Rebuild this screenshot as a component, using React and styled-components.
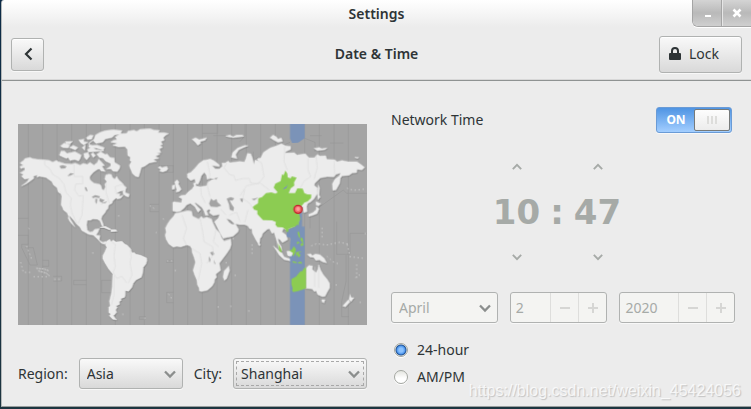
import React from "react";
import styled, { createGlobalStyle } from "styled-components";

const GlobalStyle = createGlobalStyle`
  * {
    box-sizing: border-box;
  }

  body {
    margin: 0;
    background: #1d3540;
    color: #2e3436;
    font-family: "Noto Sans", "Open Sans", sans-serif;
    font-size: 14px;
    line-height: 20px;
  }

  button,
  input,
  select {
    margin: 0;
    font: inherit;
    color: inherit;
  }
`;

const Desktop = styled.div`
  position: relative;
  min-height: 100vh;
  padding: 0 0 2px 1px;
  background: linear-gradient(to bottom, #0c2b47, #1d3540);
`;

const Window = styled.main`
  min-height: calc(100vh - 2px);
  border-left: 1px solid #b4b8b9;
  border-bottom: 1px solid #9a9e9e;
  border-top-left-radius: 3px;
  background: linear-gradient(to bottom, #ffffff 0, #ececec 27px);
`;

const TitleBar = styled.div`
  display: grid;
  grid-template-columns: 1fr auto 1fr;
  height: 28px;
`;

const Title = styled.h1`
  grid-column: 2;
  margin: 0;
  font-size: 14px;
  font-weight: 600;
  line-height: 28px;
`;

const WindowControls = styled.div`
  display: flex;
  justify-self: end;
  height: 27px;
  border: solid #a5a5a5;
  border-width: 0 0 1px 1px;
  border-bottom-left-radius: 6px;
  overflow: hidden;
  box-shadow: 0 1px 0 #fff;
`;

const WindowButton = styled.button`
  display: flex;
  align-items: center;
  justify-content: center;
  width: 29px;
  padding: 0;
  border: 0;
  background: linear-gradient(to bottom, #d4d4d4, #b9b9b9 50%, #cfcfcf);

  & + & {
    border-left: 1px solid #e6e6e6;
    box-shadow: -1px 0 0 #a5a5a5;
  }
`;

const Header = styled.header`
  display: grid;
  grid-template-columns: 1fr auto 1fr;
  align-items: center;
  height: 53px;
  padding: 0 9px;
  border-bottom: 1px solid #8f9392;
  box-shadow: inset 0 -1px 0 #d8d8d8;
`;

const HeaderTitle = styled.h2`
  margin: 0;
  font-size: 14px;
  font-weight: 600;
  line-height: 20px;
`;

const HeaderButton = styled.button`
  display: flex;
  align-items: center;
  gap: 8px;
  justify-self: ${(props) => (props.$end ? "end" : "start")};
  justify-content: ${(props) => (props.$end ? "flex-start" : "center")};
  width: ${(props) => (props.$end ? 83 : 33)}px;
  height: ${(props) => (props.$end ? 37 : 33)}px;
  padding: 0 9px;
  border: 1px solid #b0b2b1;
  border-radius: 3px;
  background: linear-gradient(to bottom, #f9f9f9, #d9d9d9);
  box-shadow: inset 0 1px 0 #fff, 0 1px 0 #f8f8f8;
`;

const Content = styled.div`
  display: grid;
  grid-template-columns: minmax(0, 349fr) minmax(0, 344fr);
  gap: 24px;
  padding: 25px 16px 16px;
`;

const PlacePanel = styled.section`
  padding-top: 18px;
`;

const Map = styled.svg`
  display: block;
  width: 100%;
  height: auto;
  background: #a4a4a4;
`;

const PlaceRow = styled.div`
  display: flex;
  align-items: center;
  gap: 11px;
  margin-top: 33px;
`;

const SelectBox = styled.div`
  display: grid;
  grid-template-columns: minmax(0, 1fr);
  flex: ${(props) => props.$flex};
  align-items: center;
  min-width: 0;
  color: #8b8e8d;

  & > * {
    grid-area: 1 / 1;
  }

  & > svg {
    justify-self: end;
    margin-right: 7px;
    pointer-events: none;
  }
`;

const Select = styled.select`
  appearance: none;
  width: 100%;
  height: 31px;
  padding: 0 7px;
  border: 1px solid #b0b2b1;
  border-radius: 3px;
  outline: ${(props) => (props.$focused ? "1px dashed #a8a8a8" : "none")};
  outline-offset: -4px;
  background: linear-gradient(to bottom, #f9f9f9, #d9d9d9);
  box-shadow: 0 1px 0 #f8f8f8;
  color: #2e3436;

  &:disabled {
    background: #f4f4f2;
    color: #a6aaa7;
    opacity: 1;
  }
`;

const TimePanel = styled.section`
  display: flex;
  flex-direction: column;
`;

const NetworkRow = styled.div`
  display: flex;
  align-items: center;
  justify-content: space-between;
  height: 27px;
  padding-right: 3px;
`;

const Switch = styled.label`
  display: grid;
  grid-template-columns: 1fr 1fr;
  align-items: center;
  width: 76px;
  height: 26px;
  padding: 1px;
  border: 1px solid #6a9bd6;
  border-radius: 3px;
  background: linear-gradient(to bottom, #4f94e3, #a3ceff);
  box-shadow: 0 1px 0 #f8f8f8;
  color: #fff;
  font-size: 12px;
  font-weight: 700;
  text-align: center;

  & input {
    appearance: none;
    width: 0;
    height: 0;
    position: absolute;
  }
`;

const SwitchKnob = styled.span`
  display: flex;
  align-items: center;
  justify-content: center;
  gap: 2px;
  height: 22px;
  border: 1px solid #777a79;
  border-radius: 2px;
  background: linear-gradient(to bottom, #fdfdfd, #ececec);

  & i {
    width: 2px;
    height: 8px;
    background: #dddddb;
  }
`;

const Clock = styled.div`
  display: grid;
  grid-template-columns: 48px 33px 48px;
  justify-content: center;
  justify-items: center;
  align-items: center;
  margin: 28px 12px 0 0;
  color: #a6aaa7;
`;

const StepButton = styled.button`
  display: flex;
  padding: 2px 8px;
  border: 0;
  background: none;

  &:disabled {
    color: #a6aaa7;
  }
`;

const Digits = styled.span`
  font-family: "DejaVu Sans", sans-serif;
  font-size: 34px;
  font-weight: 700;
  line-height: 78px;
`;

const DateRow = styled.div`
  display: flex;
  gap: 12px;
  margin-top: 29px;
`;

const Spin = styled.div`
  display: flex;
  flex: ${(props) => props.$flex} 1 0;
  min-width: 0;
  height: 31px;
  border: 1px solid #b0b2b1;
  border-radius: 3px;
  background: #f4f4f2;
  box-shadow: 0 1px 0 #f8f8f8;
  overflow: hidden;

  & input {
    flex: 1;
    width: 0;
    min-width: 0;
    padding: 0 5px;
    border: 0;
    background: none;
    color: #a6aaa7;
  }

  & button {
    display: flex;
    align-items: center;
    justify-content: center;
    width: 28px;
    padding: 0;
    border: 0;
    border-left: 1px solid #dededc;
    background: none;
    color: #d6d6d4;
  }
`;

const Formats = styled.div`
  display: flex;
  flex-direction: column;
  gap: 7px;
  margin-top: 17px;
  padding-left: 3px;
`;

const FormatLabel = styled.label`
  display: flex;
  align-items: center;
  gap: 9px;
`;

const Radio = styled.input`
  appearance: none;
  width: 14px;
  height: 14px;
  border: 1px solid #a4a7a1;
  border-radius: 50%;
  background: linear-gradient(to bottom, #e4e5e0, #ffffff 60%);
  box-shadow: 0 1px 0 #fff;

  &:checked {
    background: radial-gradient(
      circle at 50% 50%,
      #8cc3ff 0 2px,
      #4f97ee 4px,
      #1d4f91 5px,
      #f0f0ea 6px
    );
  }
`;

const Watermark = styled.div`
  position: absolute;
  right: 10px;
  bottom: 8px;
  color: rgba(255, 255, 255, 0.75);
  font-family: "Liberation Sans", sans-serif;
  font-size: 16px;
  text-shadow: 1px 1px 1px #c2c2c2;
  pointer-events: none;
`;

const Chevron = ({ direction = "down", small }) => {
  const paths = {
    down: "M1 2 L6 7 L11 2",
    up: "M1 7 L6 2 L11 7",
  };
  return (
    <svg
      width={small ? 10 : 12}
      height={small ? 8 : 10}
      viewBox="0 0 12 9"
      aria-hidden="true"
    >
      <path
        d={paths[direction]}
        fill="none"
        stroke="currentColor"
        strokeWidth="2.3"
      />
    </svg>
  );
};

const zoneLines = [
  55, 98, 141, 185, 229, 272, 316, 360, 403, 447, 490, 533, 577, 621, 665, 709,
  752, 796, 884, 928, 972, 1015,
];

// The view box is in thirds of a pixel; eastern and southern shapes are
// drawn in their own quadrant and shifted by 540 and 315.
const WorldMap = () => (
  <Map viewBox="24 27 1047 603" role="img" aria-label="Time zone map">
    <g fill="none" stroke="#979797" strokeWidth="2">
      {zoneLines.map((x) => (
        <path key={x} d={`M${x} 27 V630`} />
      ))}
      <path d="M24 310 H55 M24 361 H55 V388 H35 V398 L60 450 H82 L70 398 H45 M98 436 H116 V454 H98 M130 484 H155 V498 H130 M229 496 H191 V509 H229 M304 496 H275 V533 H304 M490 532 H470 V563 H490 M447 268 H420 V290 H447 M447 152 H490 V172 H447 M408 605 H388 V613 H408 M490 436 H470 V442 H490" />
      <path d="M577 55 H623 V27 M665 62 H610 M705 27 V62 L690 80 M730 110 V138 L745 126 M840 82 L800 100 M884 70 L915 82 V110 M935 62 H900 M1000 84 H960 M1071 235 H1010 L1000 225 L930 275 L900 300 V340 M980 320 V418 H1020 V355 H1071 M1008 420 V500 L995 560 V605 H1017" />
    </g>

    <g
      fill="#ececec"
      stroke="#ececec"
      strokeWidth="1.5"
      strokeLinejoin="round"
      style={{ filter: "drop-shadow(1px 2px 2px rgba(0, 0, 0, 0.25))" }}
    >
      {/* North and Central America */}
      <path d="M30 145 L36 139 L41 136 L44 131 L60 127 L66 130 L82 133 L99 134 L118 136 L128 141 L140 136 L144 140 L150 141 L165 146 L185 147 L196 144 L210 150 L220 145 L232 148 L240 142 L252 150 L262 142 L266 132 L274 140 L284 152 L276 153 L272 160 L262 164 L250 172 L240 184 L239 190 L242 196 L252 204 L270 208 L274 213 L276 222 L281 226 L286 216 L284 208 L290 200 L284 192 L287 180 L296 177 L304 178 L308 188 L314 192 L320 184 L327 195 L336 203 L344 213 L350 218 L344 226 L330 229 L318 236 L330 236 L328 244 L340 240 L332 250 L322 252 L318 249 L308 258 L306 265 L296 270 L294 281 L288 287 L286 292 L276 304 L274 312 L280 328 L281 336 L275 332 L270 318 L262 313 L248 312 L242 316 L232 316 L230 330 L232 345 L240 351 L248 350 L254 343 L268 341 L264 352 L258 360 L270 362 L268 375 L278 382 L288 379 L292 384 L284 388 L274 385 L262 372 L250 361 L235 358 L215 347 L210 337 L200 328 L190 315 L180 304 L174 302 L172 295 L160 285 L157 277 L153 270 L155 245 L152 232 L145 228 L140 218 L130 210 L125 200 L116 194 L108 188 L88 184 L80 187 L82 180 L70 184 L72 190 L60 199 L48 207 L34 213 L50 201 L58 190 L44 193 L34 184 L40 178 L30 174 L44 165 L44 158 L32 161 L30 154 L40 151 Z" />
      <path d="M176 303 L181 312 L187 322 L195 336 L186 328 L178 318 L174 309 Z" />
      <path d="M338 230 L347 222 L346 233 L358 237 L356 246 L348 244 L340 238 Z" />
      <path d="M142 224 L150 230 L155 238 L145 232 Z" />
      {/* Arctic archipelago */}
      <path d="M153 108 L164 108 L178 122 L170 131 L160 127 L148 121 Z M172 115 L195 110 L214 120 L211 130 L206 138 L194 134 L180 137 L173 126 Z M151 93 L162 84 L180 90 L174 99 L158 98 Z M178 98 L190 91 L204 98 L196 105 Z M166 80 L188 79 L180 87 L168 86 Z M206 75 L222 72 L221 80 L234 82 L221 90 L212 84 Z M216 98 L226 90 L224 107 Z M232 104 L245 96 L258 104 L282 108 L235 111 Z M221 116 L234 112 L239 124 L230 135 L223 128 Z M243 117 L249 113 L257 122 L249 128 Z M229 68 L240 60 L250 61 L245 73 L232 74 Z M256 60 L270 52 L286 47 L310 44 L336 47 L331 57 L314 60 L306 68 L286 72 L278 82 L258 86 L249 77 L235 87 L247 91 L262 90 L283 98 L280 106 L258 99 L236 97 L238 83 L252 73 Z M260 118 L272 110 L285 118 L292 117 L300 127 L313 129 L314 142 L330 152 L329 160 L322 170 L309 169 L303 162 L289 162 L302 153 L302 146 L287 139 L279 130 L268 128 Z M265 158 L277 155 L286 170 L273 168 Z" />
      {/* Greenland and Iceland */}
      <path d="M302 82 L310 76 L321 74 L315 66 L332 56 L350 55 L354 48 L372 45 L380 49 L390 43 L420 41 L433 45 L449 46 L444 53 L462 53 L476 56 L467 61 L460 68 L463 76 L453 80 L458 89 L450 91 L458 97 L448 102 L453 113 L441 114 L450 118 L436 124 L447 130 L430 134 L440 140 L418 144 L404 154 L394 158 L391 169 L386 186 L376 184 L367 176 L364 168 L359 157 L358 150 L364 140 L359 137 L361 127 L353 122 L352 104 L344 95 L326 96 L308 91 L322 85 Z" />
      <path d="M444 158 L450 154 L456 158 L470 154 L474 161 L470 167 L458 171 L448 168 L453 164 Z" />
      {/* South America */}
      <path
        transform="translate(0 315)"
        d="M290 64 L299 58 L304 65 L309 60 L318 66 L336 64 L344 72 L352 76 L362 86 L366 98 L374 98 L376 102 L392 106 L410 114 L411 122 L408 132 L400 142 L398 160 L394 172 L378 180 L370 190 L366 202 L356 214 L346 212 L346 224 L344 232 L332 236 L334 241 L328 245 L329 253 L318 258 L322 262 L317 270 L320 277 L314 284 L310 287 L320 300 L308 298 L298 288 L302 282 L296 278 L296 262 L300 258 L298 244 L304 219 L306 200 L308 162 L296 148 L284 128 L278 116 L278 107 L284 96 L290 82 L286 75 Z"
      />
      {/* Africa and Madagascar */}
      <path d="M480 315 L472 327 L466 339 L468 352 L465 360 L468 373 L476 387 L490 397 L500 394 L512 396 L530 390 L540 393 L545 401 L546 412 L552 428 L556 442 L549 466 L553 479 L560 495 L562 510 L567 519 L568 528 L575 530 L592 526 L606 514 L613 502 L614 493 L620 487 L617 478 L632 466 L628 445 L640 429 L650 416 L660 401 L664 388 L662 372 L642 378 L634 366 L630 354 L618 342 L608 322 L605 312 L590 306 L580 310 L574 304 L566 312 L548 303 L545 289 L534 287 L510 292 L496 295 L490 304 Z" />
      <path d="M656 453 L659 466 L650 491 L643 497 L639 486 L642 468 Z" />
      {/* Europe and Asia */}
      <path
        transform="translate(540 0)"
        d="M-52 288 L-52 262 L-48 260 L-26 263 L-24 252 L-34 246 L-26 241 L-14 240 L-5 230 L6 222 L12 213 L10 205 L17 202 L18 213 L31 215 L50 212 L53 202 L64 195 L75 192 L60 190 L51 193 L49 181 L43 172 L34 183 L30 196 L24 208 L18 206 L14 192 L2 197 L-8 188 L-8 176 L2 172 L16 158 L26 146 L39 136 L52 134 L61 132 L72 137 L88 149 L88 155 L66 151 L76 162 L88 162 L97 154 L96 144 L105 144 L115 138 L119 143 L149 139 L163 141 L167 132 L172 115 L182 116 L187 127 L192 149 L195 135 L204 138 L202 131 L212 129 L220 112 L240 99 L260 92 L274 86 L286 92 L302 94 L302 103 L289 109 L284 114 L313 113 L321 120 L346 116 L357 128 L373 128 L382 118 L390 123 L407 122 L411 133 L434 134 L442 140 L456 136 L474 140 L501 140 L514 149 L524 157 L516 165 L501 163 L500 173 L487 174 L477 181 L456 183 L451 190 L449 205 L438 225 L428 226 L427 206 L434 193 L448 182 L452 174 L438 178 L432 186 L412 185 L391 189 L374 205 L373 212 L382 218 L382 235 L372 252 L362 261 L353 265 L350 274 L351 290 L341 293 L339 276 L330 274 L320 281 L322 292 L328 299 L331 312 L328 325 L317 334 L300 340 L289 345 L281 340 L276 350 L290 361 L293 374 L277 383 L270 374 L263 370 L267 384 L274 395 L276 407 L267 401 L262 385 L257 369 L252 352 L246 356 L238 341 L232 343 L218 355 L215 365 L210 371 L209 382 L204 385 L198 376 L187 355 L185 341 L179 342 L173 333 L164 329 L148 329 L132 325 L121 315 L109 310 L118 323 L128 329 L136 326 L146 343 L144 351 L129 364 L112 367 L99 370 L88 350 L73 320 L85 309 L89 298 L70 302 L58 294 L61 284 L56 283 L50 288 L55 301 L46 301 L42 289 L36 278 L18 264 L13 263 L23 275 L32 284 L24 292 L14 275 L1 265 L-10 270 L-17 279 L-29 289 L-40 291 Z"
      />
      {/* British Isles, Novaya Zemlya, Svalbard, Sakhalin, Japan, Sri Lanka */}
      <path d="M498 231 L500 223 L497 215 L494 201 L501 194 L507 201 L505 207 L514 223 L507 230 Z M486 223 L487 211 L494 210 L494 222 Z" />
      <path
        transform="translate(540 0)"
        d="M124 127 L128 112 L143 99 L164 91 L174 92 L160 98 L146 105 L137 119 L141 131 Z M6 73 L17 68 L28 74 L50 68 L45 76 L30 80 L32 85 L23 91 L16 82 Z M107 63 L120 60 L129 65 L140 60 L157 60 L162 64 L130 68 L116 66 Z M240 68 L249 60 L259 65 L264 72 L274 69 L278 79 L264 82 L250 75 Z M372 100 L388 97 L395 101 L411 99 L405 104 L382 107 Z M494 127 L506 127 L503 130 Z M385 210 L389 219 L387 240 L391 246 L384 254 L382 236 Z M378 260 L393 266 L385 273 L378 270 Z M379 275 L387 281 L381 296 L365 302 L356 304 L356 298 L369 292 L378 284 Z"
      />
      <path
        transform="translate(540 315)"
        d="M206 66 L211 74 L208 78 L204 73 Z M250 78 L263 88 L276 99 L283 111 L304 118 L306 124 L282 119 L267 105 Z M290 94 L300 93 L309 99 L304 109 L293 106 Z M352 103 L362 101 L367 107 L376 102 L390 104 L403 115 L410 129 L398 126 L388 120 L377 121 L371 112 L359 111 Z M348 145 L356 136 L368 138 L367 148 L378 158 L384 147 L386 134 L392 150 L400 164 L412 178 L419 190 L419 204 L412 216 L405 229 L397 230 L383 224 L378 212 L373 215 L366 207 L348 205 Z M395 239 L405 239 L402 249 L396 246 Z M480 223 L484 233 L492 233 L483 245 L477 239 Z M475 239 L480 246 L466 261 L458 258 Z"
      />
      {/* Caribbean */}
      <path d="M270 337 L286 334 L302 342 L299 345 L282 338 Z M302 344 L318 344 L321 349 L303 350 Z" />
    </g>

    {/* scattered islands */}
    <g
      fill="none"
      stroke="#d6d6d6"
      strokeWidth="3"
      strokeLinecap="round"
      strokeDasharray="1 11"
    >
      <path d="M50 395 L64 430 M32 443 L40 472 H68 M72 485 H120 M134 493 H154 M56 340 L62 347 M420 273 L440 285 M438 352 L446 360 M460 312 L470 318 M326 302 V304" />
      <path
        strokeDasharray="3 5"
        d="M80 460 L102 462 L118 468 M86 468 L108 474 L118 482"
      />
      <path d="M472 438 H490 M496 466 V467 M476 538 L486 552 M338 598 H345 M404 610 H406 M248 414 H249 M624 576 H625 M662 574 H663 M716 588 H717 M726 390 V415 M648 443 H652 M675 481 H682 M670 370 V373" />
      <path d="M1012 220 L1030 226 L1067 222 M936 340 V365 M905 392 L920 386 L950 390 L988 382 L1020 388 M1012 390 L1020 425 L1060 430 M952 425 L968 440 L984 446 M1040 450 V490 M1048 480 L1030 492 M978 510 H980 M1050 562 H1052 M1066 355 V358" />
    </g>

    {/* seas and lakes */}
    <g fill="#a4a4a4">
      <path d="M148 153 L158 150 L170 154 L165 160 L153 161 Z M172 183 L181 174 L193 176 L181 182 Z M224 216 L229 217 L233 229 L227 227 Z M246 245 L256 240 L270 244 L267 249 L257 247 L248 249 Z M256 251 L262 252 L260 267 L256 261 Z M269 250 L284 255 L276 263 L268 259 Z M272 266 L284 261 L292 258 L286 264 Z" />
      <path
        transform="translate(540 0)"
        d="M57 266 L63 251 L70 257 L80 252 L82 261 L94 272 L81 276 L62 275 Z M110 251 L122 246 L133 250 L127 257 L119 256 L125 268 L132 278 L130 288 L119 284 L117 269 Z M150 251 L159 251 L158 262 L153 259 Z M185 252 L205 248 L192 256 Z M72 190 L84 188 L78 194 Z"
      />
      <path
        transform="translate(540 315)"
        d="M60 97 L70 95 L73 103 L66 107 Z M57 109 L62 118 L59 128 L56 120 Z M71 119 L77 132 L73 131 Z"
      />
    </g>

    {/* inland zone borders */}
    <g fill="none" stroke="#d7d7d7" strokeWidth="1.5">
      <path d="M104 136 V150 L120 162 L128 178 L148 190 L162 208 L168 232 L184 250 L181 270 L186 294 L200 325 M192 148 V184 H218 V206 L197 207 L194 225 L206 243 L220 242 L216 300 L204 326 M288 205 V232 L298 265 M340 207 L315 215 L318 234 M304 380 L316 388 L312 422 L316 455 L309 472 L320 490 L336 484 L350 504 M360 405 L364 425 L360 442 L366 480 L355 504 M312 482 V540 L304 570" />
      <path
        transform="translate(540 0)"
        d="M110 144 L102 158 L118 178 L132 182 L136 196 L160 190 L178 190 L182 204 L204 206 L222 186 L215 144 L202 136 M284 94 L282 140 L292 165 M354 130 V165 L362 185 L342 198 L330 220 M378 122 L382 158 L372 192 M432 138 L434 180 M52 140 L60 180 L52 212 L60 245 M150 242 L170 212 L210 204 L238 225 M164 224 L158 250 L180 266 L188 280 M32 216 L34 240 L46 264 M118 300 L140 292 L150 320 M174 285 L164 322 M92 282 L108 300"
      />
      <path d="M516 300 L530 340 L520 370 L530 392 M570 310 L578 350 L582 380 L608 395 L610 420 L590 445 M544 400 L570 415 L575 445 L565 495 M618 345 L610 380 L626 395 M914 455 V515 M926 455 V518" />
    </g>

    {/* selected zone */}
    <g fill="#7b93b8">
      <path
        transform="translate(540 0)"
        d="M300 27 H344 V70 L324 83 L306 84 L300 70 Z"
      />
      <path
        transform="translate(540 315)"
        d="M325 -24 H336 V20 H344 V315 H300 V75 L302 54 L290 50 V30 L312 21 L327 5 Z"
      />
    </g>
    <g fill="#8ccc52">
      <path
        transform="translate(540 0)"
        d="M188 276 L194 271 L204 265 L205 250 L216 246 L228 234 L244 232 L256 236 L263 232 L251 218 L256 206 L272 198 L276 178 L281 180 L286 167 L292 176 L293 187 L302 190 L305 184 L320 188 L312 202 L313 212 L302 220 L296 234 L315 234 L322 220 L338 221 L343 234 L352 238 L364 239 L363 249 L353 259 L343 263 L332 276 L320 281 L322 292 L328 299 L331 312 L325 325 L317 334 L300 340 L289 345 L278 337 L262 336 L256 329 L258 321 L246 316 L219 315 L202 297 L202 287 L192 284 Z"
      />
      <path
        transform="translate(540 315)"
        d="M348 143 V205 L340 208 L333 210 L324 213 L310 216 L306 212 L308 206 L304 193 L304 177 L318 170 L324 162 L332 153 L336 154 L342 144 Z M264 70 L269 79 L274 88 L275 98 L268 93 Z M296 94 L306 88 L311 78 L318 87 L315 99 L309 110 L306 97 Z M322 10 L327 8 L325 18 Z M288 28 L296 29 L294 36 L288 35 Z M322 36 L327 35 L330 49 L327 54 Z M331 52 L338 55 L340 70 L332 62 Z M322 64 L330 68 L320 73 Z M338 67 L341 76 L332 78 L331 73 Z M318 96 L336 94 L325 99 L332 105 L326 113 L321 104 L318 111 Z M308 123 L320 126 L319 130 L307 127 Z M323 127 L333 125 L337 131 L325 130 Z"
      />
    </g>
    <path d="M296 94 L300 93 L309 99 L304 109 L293 106 Z" transform="translate(540 315)" fill="#ececec" />
    <path
      d="M818 224 L822 219 L829 214 L833 208 L829 219 Z"
      fill="#7b93b8"
    />
    <circle cx="864" cy="283" r="12" fill="#f06a6a" stroke="#c32a30" strokeWidth="4" />
    <circle cx="864" cy="282" r="6" fill="#ff9c98" />
  </Map>
);

const SpinBox = ({ label, value, flex }) => (
  <Spin $flex={flex}>
    <input aria-label={label} defaultValue={value} disabled />
    <button type="button" aria-label={`Decrease ${label}`} disabled>
      <svg width="12" height="12" viewBox="0 0 12 12">
        <path d="M1 6 H11" stroke="currentColor" strokeWidth="2" />
      </svg>
    </button>
    <button type="button" aria-label={`Increase ${label}`} disabled>
      <svg width="12" height="12" viewBox="0 0 12 12">
        <path d="M1 6 H11 M6 1 V11" stroke="currentColor" strokeWidth="2" />
      </svg>
    </button>
  </Spin>
);

const App = () => {
  const [networkTime, setNetworkTime] = React.useState(true);
  const [format, setFormat] = React.useState("24");

  return (
    <>
      <GlobalStyle />
      <Desktop>
        <Window>
          <TitleBar>
            <Title>Settings</Title>
            <WindowControls>
              <WindowButton type="button" aria-label="Minimize">
                <svg width="10" height="10" viewBox="0 0 10 10">
                  <path d="M2 8 H8" stroke="#fff" strokeWidth="2" />
                </svg>
              </WindowButton>
              <WindowButton type="button" aria-label="Close">
                <svg width="10" height="10" viewBox="0 0 10 10">
                  <path
                    d="M1.5 1.5 L8.5 8.5 M8.5 1.5 L1.5 8.5"
                    stroke="#fff"
                    strokeWidth="2.6"
                  />
                </svg>
              </WindowButton>
            </WindowControls>
          </TitleBar>

          <Header>
            <HeaderButton type="button" aria-label="Back">
              <svg width="10" height="14" viewBox="0 0 10 14">
                <path
                  d="M8.5 1.5 L3 7 L8.5 12.5"
                  fill="none"
                  stroke="#2e3436"
                  strokeWidth="2.2"
                />
              </svg>
            </HeaderButton>
            <HeaderTitle>Date &amp; Time</HeaderTitle>
            <HeaderButton type="button" $end>
              <svg width="12" height="14" viewBox="0 0 12 14">
                <path
                  d="M3 7 V4 Q3 1 6 1 Q9 1 9 4 V7"
                  fill="none"
                  stroke="#2e3436"
                  strokeWidth="2"
                />
                <rect y="6" width="12" height="7" rx="1" fill="#2e3436" />
              </svg>
              Lock
            </HeaderButton>
          </Header>

          <Content>
            <PlacePanel>
              <WorldMap />
              <PlaceRow>
                <label htmlFor="region">Region:</label>
                <SelectBox $flex="0 0 104px">
                  <Select id="region">
                    <option>Asia</option>
                  </Select>
                  <Chevron />
                </SelectBox>
                <label htmlFor="city">City:</label>
                <SelectBox $flex="1">
                  <Select id="city" $focused>
                    <option>Shanghai</option>
                  </Select>
                  <Chevron />
                </SelectBox>
              </PlaceRow>
            </PlacePanel>

            <TimePanel>
              <NetworkRow>
                <label htmlFor="network-time">Network Time</label>
                <Switch>
                  <input
                    id="network-time"
                    type="checkbox"
                    checked={networkTime}
                    onChange={(e) => setNetworkTime(e.target.checked)}
                  />
                  <span>ON</span>
                  <SwitchKnob>
                    <i />
                    <i />
                    <i />
                  </SwitchKnob>
                </Switch>
              </NetworkRow>

              <Clock>
                <StepButton type="button" aria-label="Hour up" disabled>
                  <Chevron direction="up" small />
                </StepButton>
                <span />
                <StepButton type="button" aria-label="Minute up" disabled>
                  <Chevron direction="up" small />
                </StepButton>
                <Digits>10</Digits>
                <Digits>:</Digits>
                <Digits>47</Digits>
                <StepButton type="button" aria-label="Hour down" disabled>
                  <Chevron small />
                </StepButton>
                <span />
                <StepButton type="button" aria-label="Minute down" disabled>
                  <Chevron small />
                </StepButton>
              </Clock>

              <DateRow>
                <SelectBox $flex="108 1 0">
                  <Select aria-label="Month" disabled>
                    <option>April</option>
                  </Select>
                  <Chevron />
                </SelectBox>
                <SpinBox label="day" value="2" flex={97} />
                <SpinBox label="year" value="2020" flex={115} />
              </DateRow>

              <Formats>
                <FormatLabel>
                  <Radio
                    type="radio"
                    name="format"
                    checked={format === "24"}
                    onChange={() => setFormat("24")}
                  />
                  24-hour
                </FormatLabel>
                <FormatLabel>
                  <Radio
                    type="radio"
                    name="format"
                    checked={format === "12"}
                    onChange={() => setFormat("12")}
                  />
                  AM/PM
                </FormatLabel>
              </Formats>
            </TimePanel>
          </Content>
        </Window>
        <Watermark>https://blog.csdn.net/weixin_45424056</Watermark>
      </Desktop>
    </>
  );
};

export default App;
